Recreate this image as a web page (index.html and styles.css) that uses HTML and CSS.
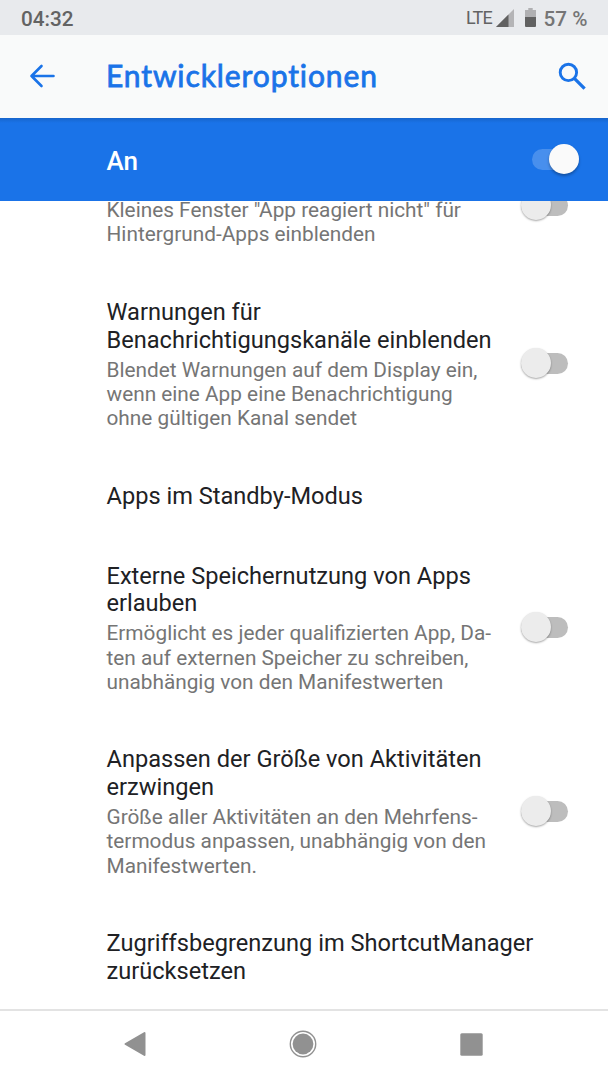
FILE: index.html
```html
<!DOCTYPE html>
<html lang="de">
<head>
    <meta charset="UTF-8">
    <meta name="viewport" content="width=device-width, initial-scale=1.0">
    <title>Entwickleroptionen</title>
    <link rel="stylesheet" href="styles.css">
</head>
<body>
    <div class="statusbar">
        <span class="time">04:32</span>
        <span class="lte">LTE</span>
        <svg class="signal" width="18" height="18" viewBox="0 0 18 18">
            <path d="M18 0v18H0z" fill="#b4b4b6"/>
            <path d="M12.5 5.5V18H0z" fill="#616161"/>
        </svg>
        <svg class="battery" width="11" height="19" viewBox="0 0 11 19">
            <path d="M3.3 0h4.4v2H11v7H0V2h3.3z" fill="#b0b0b2"/>
            <path d="M0 9h11v9a1 1 0 0 1-1 1H1a1 1 0 0 1-1-1z" fill="#616161"/>
        </svg>
        <span class="percent">57 %</span>
    </div>

    <header class="appbar">
        <svg class="back" width="26" height="24" viewBox="0 0 26 24">
            <path d="M24.5 12H2.5M12.5 2L2.5 12L12.5 22" fill="none" stroke="#1a73e8" stroke-width="2.6" stroke-linecap="round" stroke-linejoin="round"/>
        </svg>
        <h1>Entwickleroptionen</h1>
        <svg class="search" width="28" height="28" viewBox="0 0 28 28">
            <circle cx="10.4" cy="10.4" r="8.2" fill="none" stroke="#1a73e8" stroke-width="2.9"/>
            <path d="M16.6 16.6L26.6 26.6" stroke="#1a73e8" stroke-width="3.2"/>
        </svg>
    </header>

    <div class="master">
        <span class="master-label">An</span>
        <span class="switch on"></span>
    </div>

    <main class="list">
        <div class="item scrolled">
            <div class="text">
                <p>Kleines Fenster "App reagiert nicht" für<br>Hintergrund-Apps einblenden</p>
            </div>
            <span class="switch"></span>
        </div>
        <div class="item">
            <div class="text">
                <h2>Warnungen für<br>Benachrichtigungskanäle einblenden</h2>
                <p>Blendet Warnungen auf dem Display ein,<br>wenn eine App eine Benachrichtigung<br>ohne gültigen Kanal sendet</p>
            </div>
            <span class="switch"></span>
        </div>
        <div class="item">
            <div class="text">
                <h2>Apps im Standby-Modus</h2>
            </div>
        </div>
        <div class="item">
            <div class="text">
                <h2>Externe Speichernutzung von Apps<br>erlauben</h2>
                <p>Ermöglicht es jeder qualifizierten App, Da-<br>ten auf externen Speicher zu schreiben,<br>unabhängig von den Manifestwerten</p>
            </div>
            <span class="switch"></span>
        </div>
        <div class="item">
            <div class="text">
                <h2>Anpassen der Größe von Aktivitäten<br>erzwingen</h2>
                <p>Größe aller Aktivitäten an den Mehrfens-<br>termodus anpassen, unabhängig von den<br>Manifestwerten.</p>
            </div>
            <span class="switch"></span>
        </div>
        <div class="item">
            <div class="text">
                <h2>Zugriffsbegrenzung im ShortcutManager<br>zurücksetzen</h2>
            </div>
        </div>
    </main>

    <nav class="navbar">
        <svg width="22" height="26" viewBox="0 0 22 26">
            <path d="M20.5 2v22L1.5 13z" fill="#919191" stroke="#919191" stroke-width="2" stroke-linejoin="round"/>
        </svg>
        <svg width="28" height="28" viewBox="0 0 28 28">
            <circle cx="14" cy="14" r="12.7" fill="none" stroke="#919191" stroke-width="1.4"/>
            <circle cx="14" cy="14" r="10.4" fill="#919191"/>
        </svg>
        <svg width="23" height="23" viewBox="0 0 23 23">
            <rect x="0.3" y="0.3" width="22.4" height="22.4" rx="1.5" fill="#919191"/>
        </svg>
    </nav>
</body>
</html>
```
FILE: styles.css
```css
* {
    box-sizing: border-box;
}

body {
    margin: 0;
    height: 1080px;
    display: flex;
    flex-direction: column;
    overflow: hidden;
    font-family: Roboto, "Liberation Sans", sans-serif;
    background: #fff;
}

h1, h2, p {
    margin: 0;
    font-weight: normal;
    white-space: nowrap;
}

svg, .switch {
    display: block;
    flex-shrink: 0;
}

.statusbar {
    height: 35px;
    flex-shrink: 0;
    display: flex;
    align-items: center;
    padding: 2px 20.5px 0 21px;
    background: #e8eaed;
    color: #636363;
    font-size: 20.7px;
    line-height: 24px;
    white-space: nowrap;
}

.time {
    margin-right: auto;
    font-weight: 500;
}

.lte {
    margin-top: -2px;
    font-size: 18px;
    letter-spacing: -0.7px;
}

.signal {
    margin-left: 4px;
    margin-top: -1px;
}

.battery {
    margin-left: 11px;
    margin-top: -2px;
}

.percent {
    margin-left: 7.5px;
    color: #757575;
    font-weight: 500;
}

.appbar {
    height: 83px;
    flex-shrink: 0;
    display: flex;
    align-items: center;
    padding: 0 22px 1px 29px;
    background: #f9fafa;
    color: #1a73e8;
}

.appbar h1 {
    margin: -2px 0 0 51px;
    font-family: Lato, Roboto, sans-serif;
    font-size: 30px;
    line-height: 36px;
    letter-spacing: 0.9px;
    -webkit-text-stroke: 0.8px #1a73e8;
}

.search {
    margin-left: auto;
}

.master {
    height: 83px;
    flex-shrink: 0;
    display: flex;
    align-items: center;
    justify-content: space-between;
    padding: 0 29px 0 106.5px;
    background: linear-gradient(#1765cc, #1a73e8 5px);
    color: #fff;
}

.master-label {
    padding-top: 3px;
    font-size: 26px;
    font-weight: 500;
    line-height: 30px;
}

.list {
    flex: 1;
    min-height: 0;
    overflow: hidden;
}

.item {
    display: flex;
    align-items: center;
    justify-content: space-between;
    padding: 27px 40.5px 25.4px 106.5px;
}

.item.scrolled {
    margin-top: -61px;
    padding-top: 0;
    height: 132px;
}

.item.scrolled .text {
    padding-top: 57px;
}

.item.scrolled .switch {
    margin-top: 27px;
}

.item h2 {
    color: #202124;
    font-size: 23.6px;
    line-height: 27.5px;
}

.item p {
    color: #757575;
    font-size: 20.8px;
    line-height: 24.2px;
}

.item h2 + p {
    margin-top: 3.8px;
}

/* thumb overlaps the end of the track */
.switch {
    position: relative;
    width: 47px;
    height: 21px;
    border-radius: 11px;
    background: #bdbdbd;
}

.item .switch {
    margin-bottom: 2px;
}

.switch::after {
    content: "";
    position: absolute;
    left: 0;
    top: -5px;
    width: 30px;
    height: 30px;
    border-radius: 50%;
    background: #ececec;
    box-shadow: 0 1px 2px rgba(0, 0, 0, 0.35);
}

.switch.on {
    background: #488fed;
}

.switch.on::after {
    left: auto;
    right: 0;
    background: #fafafa;
    box-shadow: 0 2px 3px rgba(0, 0, 0, 0.3);
}

.navbar {
    height: 71px;
    flex-shrink: 0;
    display: flex;
    align-items: center;
    justify-content: space-between;
    padding: 0 125px 3px 123.5px;
    border-top: 2px solid #e3e3e3;
    background: #fff;
}
```
